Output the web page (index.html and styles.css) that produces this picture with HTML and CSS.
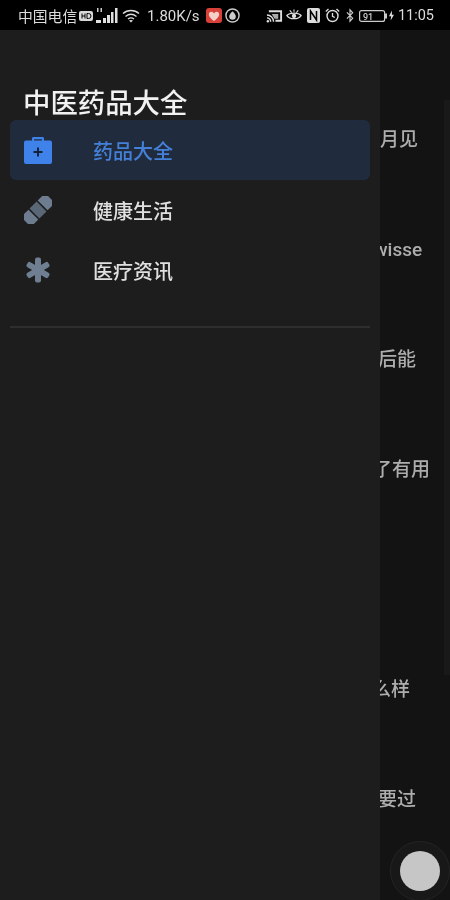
FILE: index.html
```html
<!DOCTYPE html>
<html lang="zh">
<head>
<meta charset="utf-8">
<title>中医药品大全</title>
<link rel="stylesheet" href="styles.css">
</head>
<body>
<div class="phone">
  <header class="status">
    <span class="carrier">中国电信</span>
    <svg class="s-hd" viewBox="0 0 14 10"><rect width="14" height="10" rx="2" fill="#d8d8d8"/><path d="M3 2.500v5M6 2.500v5M3 5h3M8 2.500v5h1.500a2.500 2.500 0 0 0 0-5z" fill="none" stroke="#000" stroke-width="1"/></svg>
    <svg class="s-signal" viewBox="0 0 23 17"><path d="M2 1h1.500v4H2zM5.500 1H7v4H5.500z" fill="#ccc"/><path d="M1 13h5v3H1zM8 11h3v5H8zM12 8h3v8h-3zM16 5h2.500v11H16zM20 1h2.500v15H20z" fill="#e0e0e0"/></svg>
    <svg class="s-wifi" viewBox="0 0 18 14"><path d="M1 4.500C5.500.5 12.500.5 17 4.500M3.500 7.500c3.500-2.800 7.500-2.800 11 0M6 10c2-1.500 4-1.500 6 0" fill="none" stroke="#ddd" stroke-width="1.400"/><path d="M9 13.500l-2-2c1.200-.8 2.800-.8 4 0z" fill="#ddd"/></svg>
    <span class="speed">1.80K/s</span>
    <svg class="s-heart" viewBox="0 0 16 15"><rect width="16" height="15" rx="3" fill="#d8403a"/><path d="M8 13C3 9.500 2 6.500 3.500 4.500c1.200-1.500 3.500-1 4.500 1 1-2 3.300-2.500 4.500-1C14 6.500 13 9.500 8 13z" fill="#f4d0c8"/></svg>
    <svg class="s-circle" viewBox="0 0 16 16"><circle cx="8" cy="8" r="7" fill="none" stroke="#ccc" stroke-width="1.500"/><path d="M8 3.500c2.500 2.500 3.500 4 3.500 5.500a3.500 3.500 0 0 1-7 0c0-1.500 1-3 3.500-5.500z" fill="#ccc"/></svg>
    <span class="spacer"></span>
    <svg class="s-cast" viewBox="0 0 18 14"><path d="M3 1h14v12h-7V11h5V3H3z" fill="#ddd"/><path d="M1 6c4 0 7 3 7 7M1 9c2.300 0 4 1.700 4 4" fill="none" stroke="#ddd" stroke-width="1.500"/><circle cx="2" cy="12.500" r="1.300" fill="#ddd"/><path d="M6 5h7v5H9" fill="#aaa"/></svg>
    <svg class="s-eye" viewBox="0 0 17 14"><path d="M1 6.500C4 3 13 3 16 6.500 13 11 4 11 1 6.500z" fill="none" stroke="#ddd" stroke-width="1.400"/><circle cx="8.500" cy="7" r="2.300" fill="#ddd"/><path d="M4 1l2 2.500M8.500 0v2.500M13 1l-2 2.500" stroke="#ddd" stroke-width="1.200"/></svg>
    <svg class="s-nfc" viewBox="0 0 13 15"><rect width="13" height="15" rx="2" fill="#ddd"/><path d="M3.500 12V3l6 9V3" fill="none" stroke="#000" stroke-width="1.500"/></svg>
    <svg class="s-alarm" viewBox="0 0 15 15"><circle cx="7.500" cy="8" r="5.500" fill="none" stroke="#ddd" stroke-width="1.400"/><path d="M7.500 5v3.300l2.300 1.200M.8 3.500L3.500 1M14.200 3.500L11.500 1" fill="none" stroke="#ddd" stroke-width="1.300"/></svg>
    <svg class="s-bt" viewBox="0 0 9 15"><path d="M1 4l6.500 6.500L4.500 14V1l3 3.500L1 11" fill="none" stroke="#cfcfcf" stroke-width="1.300"/></svg>
    <svg class="s-batt" viewBox="0 0 28 12"><rect x=".6" y=".6" width="25" height="10.800" rx="2" fill="none" stroke="#ccc" stroke-width="1.200"/><rect x="26" y="3.500" width="2" height="5" fill="#ccc"/><text x="4" y="9.500" class="batt-text">91</text></svg>
    <svg class="s-bolt" viewBox="0 0 6 12"><path d="M3.500 0L0 7h2.500L2 12l4-7H3.500z" fill="#ddd"/></svg>
    <span class="time">11:05</span>
  </header>

  <main class="behind">
    <p class="peek peek-a">一月见</p>
    <p class="peek peek-b">Swisse</p>
    <p class="peek peek-c">然后能</p>
    <p class="peek peek-d">了有用</p>
    <p class="peek peek-e"></p>
    <p class="peek peek-f">么样</p>
    <p class="peek peek-g">要过</p>
  </main>

  <div class="scroll-band"></div>

  <nav class="drawer">
    <h1 class="title">中医药品大全</h1>
    <ul class="menu">
      <li class="item active">
        <svg class="icon" viewBox="0 0 28 28"><path d="M8 6V2.500C8 1.500 8.800 1 9.500 1h9c.8 0 1.500.5 1.500 1.500V6h-2V3.200h-8V6z" fill="#3f82ea"/><path d="M2 4.500h24a2 2 0 0 1 2 2V26a2 2 0 0 1-2 2H2a2 2 0 0 1-2-2V6.500a2 2 0 0 1 2-2z" fill="#3f82ea"/><path d="M13 11.500h2v3.500h3.500v2H15v3.500h-2V17H9.500v-2H13z" fill="#14233c"/></svg>
        <span class="label">药品大全</span>
      </li>
      <li class="item">
        <svg class="icon" viewBox="0 0 28 28"><g transform="rotate(-45 14 14)"><path d="M-3 8.500A1.500 1.500 0 0 1-1.500 7h9v14h-9A1.500 1.500 0 0 1-3 19.500z" fill="#6d7c8e"/><rect x="9" y="7" width="10" height="14" fill="#5a6776"/><path d="M20.500 7h9A1.500 1.500 0 0 1 31 8.500v11a1.500 1.500 0 0 1-1.500 1.500h-9z" fill="#6d7c8e"/></g></svg>
        <span class="label">健康生活</span>
      </li>
      <li class="item">
        <svg class="icon" viewBox="0 0 28 28"><g fill="#6f7f91"><rect x="11" y="1.500" width="6" height="25" rx="2"/><rect x="11" y="1.500" width="6" height="25" rx="2" transform="rotate(60 14 14)"/><rect x="11" y="1.500" width="6" height="25" rx="2" transform="rotate(120 14 14)"/></g></svg>
        <span class="label">医疗资讯</span>
      </li>
    </ul>
    <hr class="rule">
  </nav>

  <div class="float-ball"><span class="ball"></span></div>
</div>
</body>
</html>
```
FILE: styles.css
```css
* { box-sizing: border-box; }
html, body { margin: 0; padding: 0; }
body { background: #111; font-family: "Noto Sans CJK SC", "Roboto", sans-serif; }
.phone { position: relative; width: 450px; height: 900px; overflow: hidden; background: #131313; filter: blur(0.45px); }

.status { height: 30px; background: #000; color: #dcdcdc; display: flex; align-items: center; padding: 1px 16px 0 18px; font-family: "Roboto", "Noto Sans CJK SC", sans-serif; font-size: 14px; }
.status svg { display: block; flex: none; }
.carrier { font-family: "Noto Sans CJK SC", sans-serif; font-size: 14.800px; width: 61px; white-space: nowrap; }
.s-hd { width: 14px; height: 10px; margin-left: 0; }
.s-signal { width: 23px; height: 17px; margin-left: 2px; }
.s-wifi { width: 18px; height: 14px; margin-left: 4px; }
.speed { margin-left: 7px; width: 59px; white-space: nowrap; font-size: 15px; }
.s-heart { width: 16px; height: 15px; }
.s-circle { width: 15px; height: 15px; margin-left: 3px; }
.spacer { flex: 1; }
.s-cast { width: 17px; height: 14px; }
.s-eye { width: 16px; height: 14px; margin-left: 3px; }
.s-nfc { width: 13px; height: 15px; margin-left: 5px; }
.s-alarm { width: 15px; height: 15px; margin-left: 5px; }
.s-bt { width: 8px; height: 15px; margin-left: 6px; }
.s-batt { width: 28px; height: 12px; margin-left: 5px; }
.s-bolt { width: 5px; height: 11px; margin-left: 2px; }
.time { margin-left: 4px; font-size: 14.500px; }
.batt-text { font-size: 9px; font-weight: 500; fill: #ccc; font-family: "Roboto", sans-serif; }

.behind { height: 870px; padding-top: 55px; }
.peek { margin: 0; height: 110px; line-height: 110px; font-size: 19px; font-weight: 500; color: #adadad; white-space: nowrap; font-family: "Roboto", "Noto Sans CJK SC", sans-serif; }
.peek-a { padding-left: 361px; }
.peek-b { padding-left: 362px; }
.peek-c { padding-left: 359px; }
.peek-d { padding-left: 373px; }
.peek-f { padding-left: 372px; }
.peek-g { padding-left: 378px; }

.scroll-band { position: absolute; right: 0; top: 100px; width: 6px; height: 575px; background: #191919; }

.drawer { position: absolute; left: 0; top: 30px; width: 380px; height: 870px; background: #1d1d1d; padding: 0 10px; color: #e8e8e8; }
.title { margin: 0; padding: 53px 0 0 14px; height: 90px; font-size: 27.400px; line-height: 36px; font-weight: 500; color: #f2f2f2; white-space: nowrap; text-indent: -1px; }
.menu { list-style: none; margin: 0; padding: 0; }
.item { height: 60px; display: flex; align-items: center; padding-left: 14px; border-radius: 6px; }
.item.active { background: #202c3e; }
.item .icon { width: 28px; height: 28px; flex: none; }
.label { margin-left: 41px; font-size: 20px; font-weight: 500; line-height: 30px; color: #e0e0e0; padding-top: 1px; }
.active .label { color: #4480d8; }
.rule { margin: 26px 0 0; border: 0; height: 2px; background: #2e2e2e; }

.float-ball { position: absolute; left: 390px; top: 841px; width: 60px; height: 60px; border-radius: 50%; border: 1px solid #242424; background: #181818; display: flex; align-items: center; justify-content: center; }
.ball { width: 40px; height: 40px; border-radius: 50%; background: #c6c6c6; }
```
